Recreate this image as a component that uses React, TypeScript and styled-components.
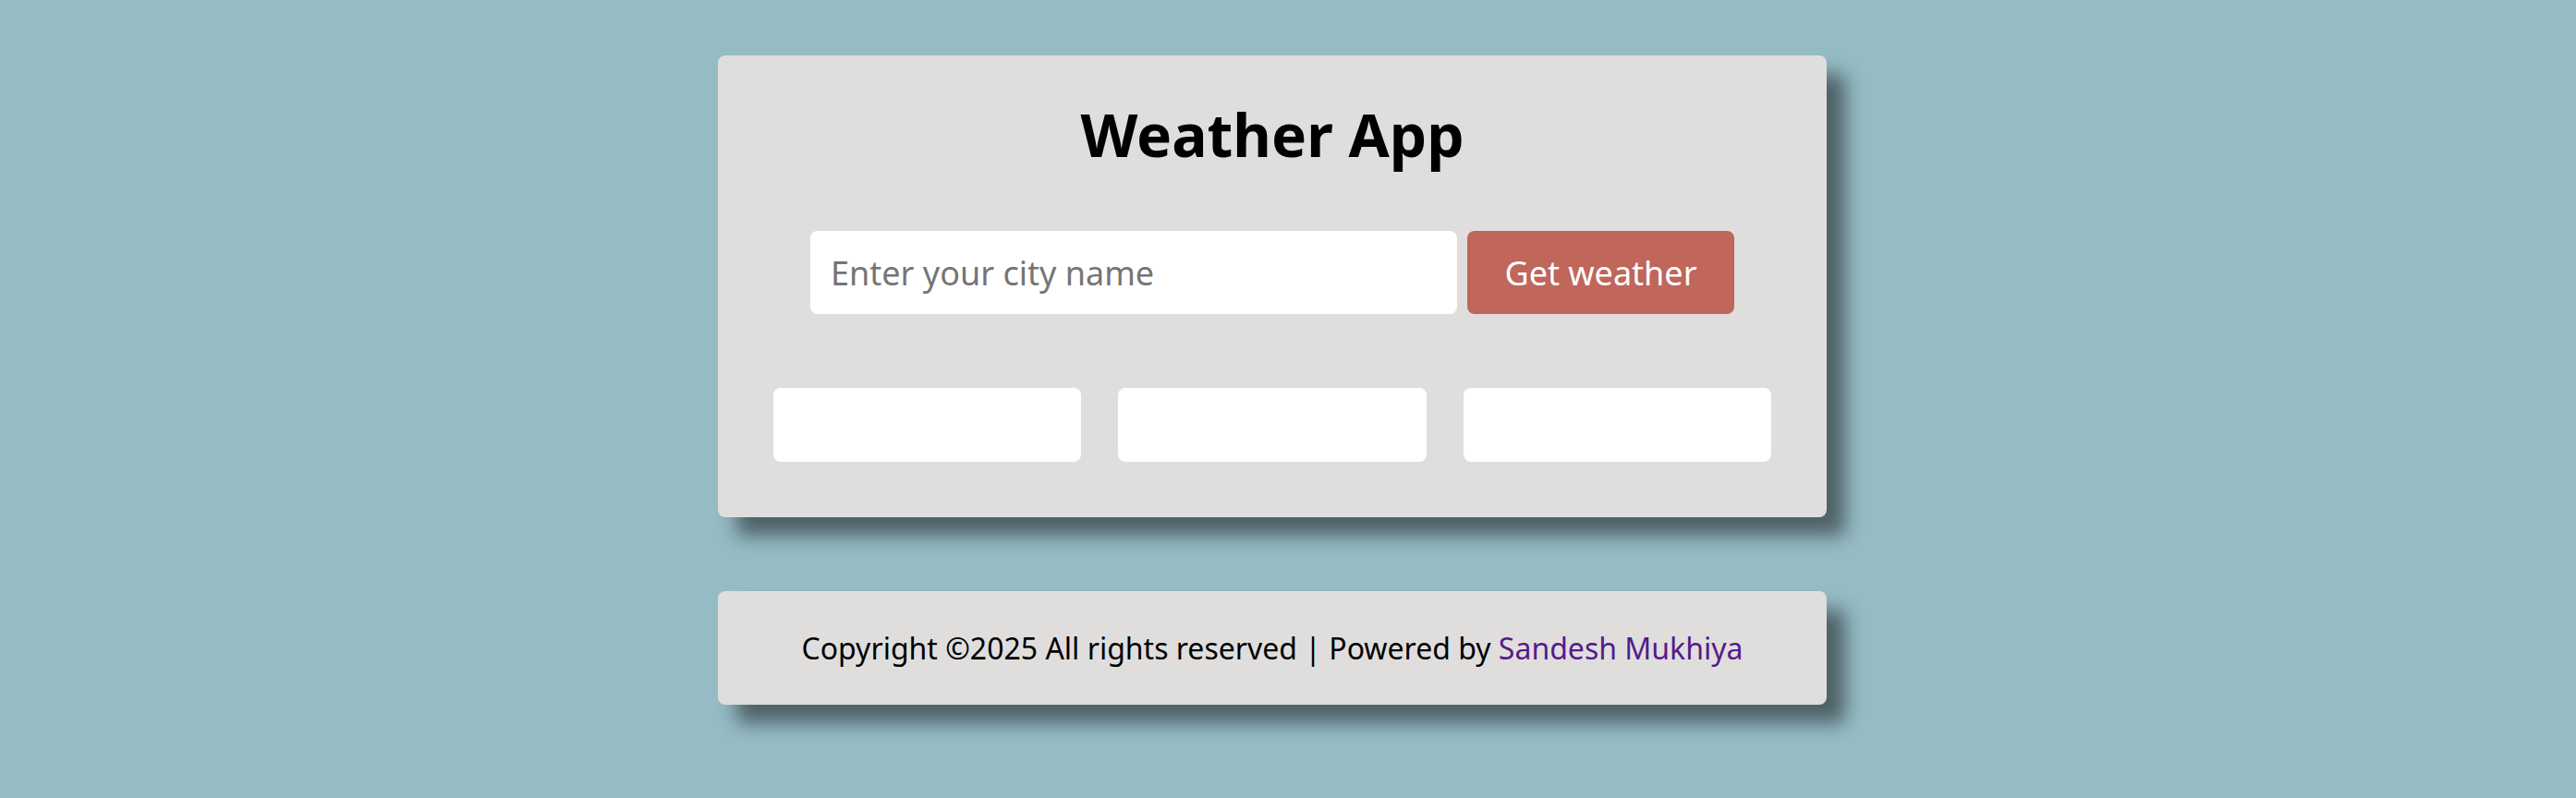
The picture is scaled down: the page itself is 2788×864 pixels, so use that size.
import styled, { createGlobalStyle } from 'styled-components';

const GlobalStyle = createGlobalStyle`
  body {
    margin: 0;
    background-color: #95bbc5;
    font-family: 'Noto Sans', 'DejaVu Sans', sans-serif;
  }
`;

const Page = styled.div`
  display: flex;
  flex-flow: column;
  align-items: center;
  gap: 80px;
  padding: 60px 34px 100px 0;
`;

const Card = styled.div`
  width: 1200px;
  box-sizing: border-box;
  padding: 52px 60px 60px;
  border-radius: 8px;
  background-color: #dfdedd;
  box-shadow: 20px 20px 20px rgba(0, 0, 0, 0.48);
`;

const Title = styled.h1`
  margin: 0 0 70px;
  font-size: 64px;
  line-height: 68px;
  font-weight: 700;
  text-align: center;
  color: #000;
`;

const SearchRow = styled.form`
  display: flex;
  justify-content: center;
  gap: 11px;
  margin-bottom: 80px;
`;

const CityInput = styled.input`
  width: 700px;
  height: 90px;
  box-sizing: border-box;
  padding: 0 22px;
  border: none;
  border-radius: 8px;
  background-color: #fff;
  font-family: inherit;
  font-size: 36px;
  outline: none;
  &::placeholder {
    color: #757575;
  }
`;

const Button = styled.button`
  width: 289px;
  height: 90px;
  border: none;
  border-radius: 8px;
  background-color: #c0665b;
  color: #fff;
  font-family: inherit;
  font-size: 36px;
  cursor: pointer;
`;

const InfoGrid = styled.div`
  display: grid;
  grid-template-columns: repeat(3, 1fr);
  gap: 40px;
`;

const InfoBox = styled.div`
  height: 80px;
  border-radius: 8px;
  background-color: #fff;
`;

const Footer = styled.footer`
  width: 1200px;
  height: 123px;
  display: flex;
  justify-content: center;
  align-items: center;
  border-radius: 8px;
  background-color: #dfdedd;
  box-shadow: 20px 20px 20px rgba(0, 0, 0, 0.48);
  font-size: 32px;
  color: #000;
`;

const Link = styled.a`
  color: #551a8b;
  text-decoration: none;
`;

const App = () => {
  return (
    <>
      <GlobalStyle />
      <Page>
        <Card>
          <Title>Weather App</Title>
          <SearchRow onSubmit={(e) => e.preventDefault()}>
            <CityInput type="text" placeholder="Enter your city name" />
            <Button type="submit">Get weather</Button>
          </SearchRow>
          <InfoGrid>
            <InfoBox />
            <InfoBox />
            <InfoBox />
          </InfoGrid>
        </Card>
        <Footer>
          <span>
            Copyright ©2025 All rights reserved | Powered by&nbsp;
            <Link href="#">Sandesh Mukhiya</Link>
          </span>
        </Footer>
      </Page>
    </>
  );
};

export default App;
